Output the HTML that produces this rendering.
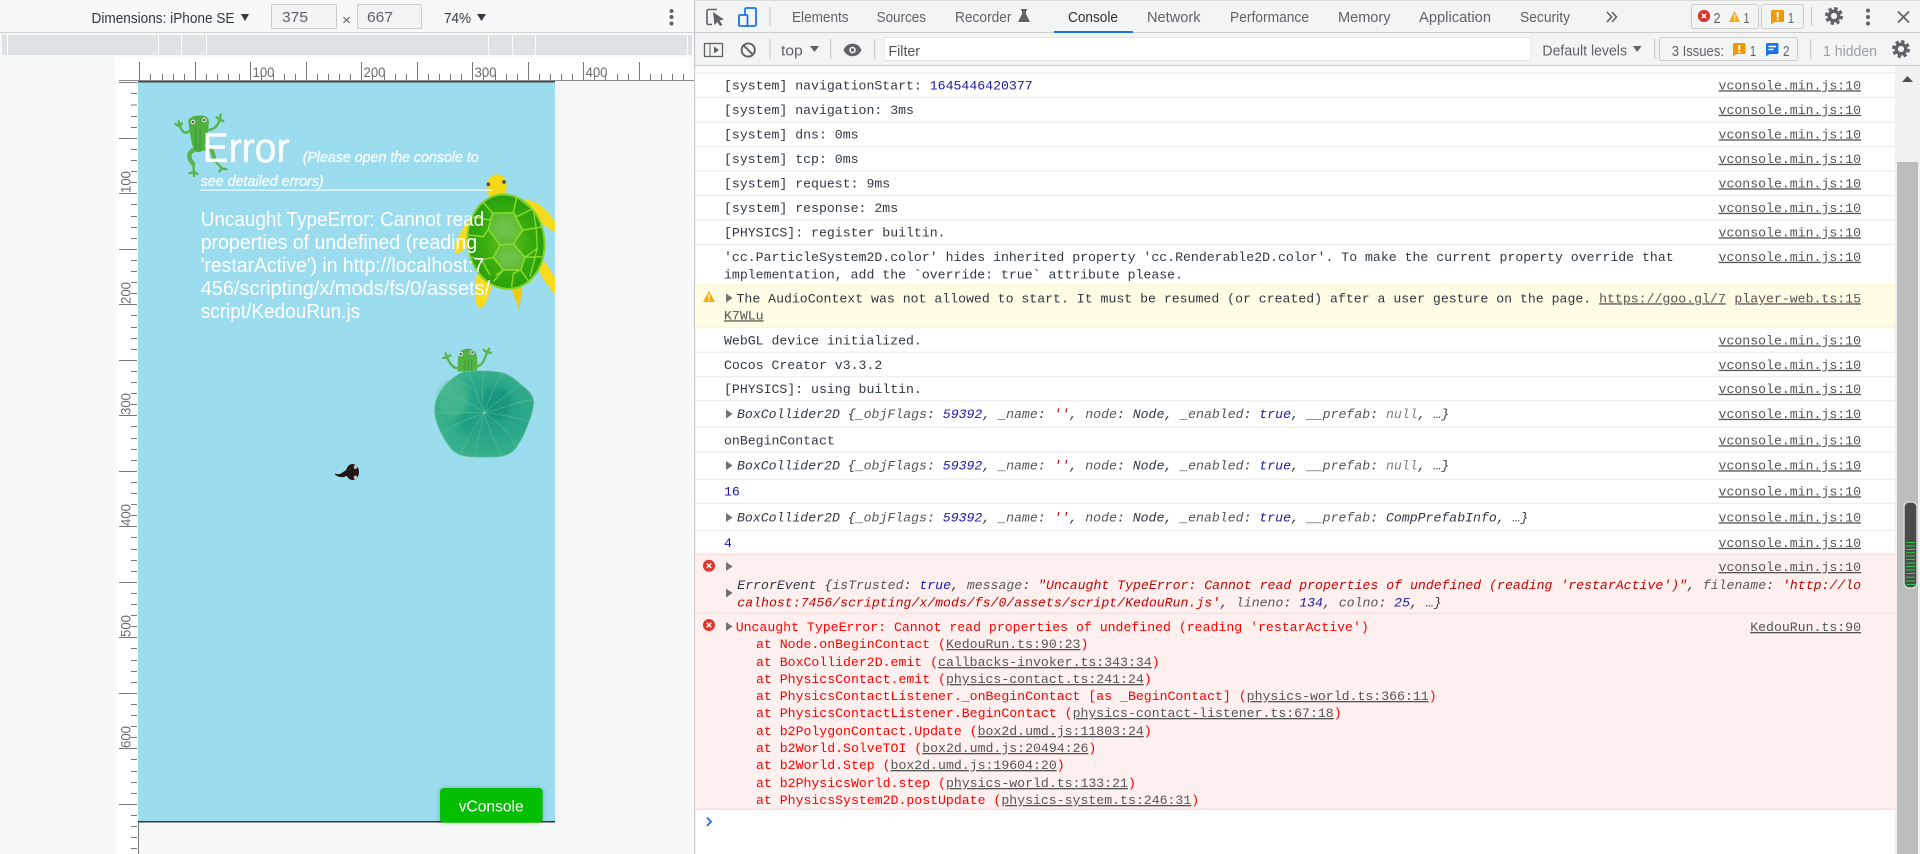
<!DOCTYPE html>
<html lang="en">
<head>
<meta charset="utf-8">
<title>DevTools</title>
<style>
html,body{margin:0;padding:0;width:1920px;height:854px;overflow:hidden;background:#fff}
svg{display:block}
text{white-space:pre}
.s{font-family:"Liberation Sans",sans-serif;font-size:14.5px;fill:#5f6368}
.m{font-family:"Liberation Mono",monospace;font-size:13.2px;fill:#303942}
.i{font-style:italic}
.k{fill:#565656}
.n{fill:#1a1aa6}
.r{fill:#c80000}
.e{fill:#ff0000}
.g{fill:#808080}
.l{fill:#555;text-decoration:underline}
.w{font-family:"Liberation Sans",sans-serif;fill:#fff}
.rl{font-family:"Liberation Sans",sans-serif;font-size:14px;fill:#6b6b6b}
</style>
</head>
<body>
<svg width="1920" height="854" viewBox="0 0 1920 854" xmlns="http://www.w3.org/2000/svg">
<defs>
<radialGradient id="shell" cx=".5" cy=".5" r=".55"><stop offset="0" stop-color="#5cc020"/><stop offset=".7" stop-color="#2fa808"/><stop offset="1" stop-color="#2a9a06"/></radialGradient>
<radialGradient id="hex" cx=".5" cy=".5" r=".6"><stop offset="0" stop-color="#72c64e"/><stop offset="1" stop-color="#5cb92e"/></radialGradient>
<radialGradient id="lily" cx=".58" cy=".48" r=".6"><stop offset="0" stop-color="#1f9d84"/><stop offset=".55" stop-color="#2aa88a"/><stop offset="1" stop-color="#3bb28c"/></radialGradient>
<filter id="b1" x="-20%" y="-20%" width="140%" height="140%"><feGaussianBlur stdDeviation=".35"/></filter>
<filter id="b2" x="-20%" y="-20%" width="140%" height="140%"><feGaussianBlur stdDeviation="2.5"/></filter>
<filter id="b3" x="-50%" y="-50%" width="200%" height="200%"><feGaussianBlur stdDeviation="6"/></filter>
<clipPath id="pg"><rect x="138" y="82" width="417" height="739"/></clipPath>
</defs>

<!-- left pane -->
<rect x="0" y="0" width="695" height="854" fill="#f7f8f8"/>
<rect x="0" y="32" width="695" height="1" fill="#d0d2d4"/>
<rect x="2" y="35" width="690" height="20" fill="#dee1e6"/>
<path d="M7.500 35v20M158.500 35v20M181.500 35v20M206.500 35v20M488.500 35v20M512.500 35v20M535.500 35v20M687.500 35v20" stroke="#fff" stroke-width="1"/>
<rect x="115" y="57" width="580" height="23" fill="#fff"/>
<rect x="116" y="80" width="22" height="774" fill="#fff"/>

<!-- device toolbar -->
<text class="s" x="91.500" y="23" textLength="143" lengthAdjust="spacingAndGlyphs" style="fill:#303942">Dimensions: iPhone SE</text>
<path d="M241 14h8l-4 7z" fill="#303942"/>
<rect x="271.500" y="4.500" width="65" height="24" fill="#f1f3f4" stroke="#ccc" rx="1"/>
<text class="s" x="282" y="22" textLength="26" lengthAdjust="spacingAndGlyphs" style="fill:#5f6368;font-size:15px">375</text>
<text class="s" x="342" y="25" textLength="9" lengthAdjust="spacingAndGlyphs" style="font-size:15px">×</text>
<rect x="357.500" y="4.500" width="64" height="24" fill="#f1f3f4" stroke="#ccc" rx="1"/>
<text class="s" x="367" y="22" textLength="26" lengthAdjust="spacingAndGlyphs" style="font-size:15px">667</text>
<text class="s" x="444" y="23" textLength="27" lengthAdjust="spacingAndGlyphs" style="fill:#303942">74%</text>
<path d="M477 14h9l-4.500 7z" fill="#303942"/>
<g fill="#5f6368"><circle cx="671.500" cy="11" r="2"/><circle cx="671.500" cy="17" r="2"/><circle cx="671.500" cy="23.500" r="2"/></g>

<!-- top ruler -->
<rect x="119" y="80" width="575" height="1" fill="#8a8a8a"/>
<path d="M139.500 62V80M195.500 62V80M250.500 62V80M306.500 62V80M361.500 62V80M417.500 62V80M472.500 62V80M528.500 62V80M583.500 62V80M639.500 62V80" stroke="#777" fill="none"/>
<path d="M150.500 74v6M162.500 74v6M173.500 74v6M184.500 74v6M206.500 74v6M217.500 74v6M228.500 74v6M239.500 74v6M261.500 74v6M273.500 74v6M284.500 74v6M295.500 74v6M317.500 74v6M328.500 74v6M339.500 74v6M350.500 74v6M372.500 74v6M384.500 74v6M395.500 74v6M406.500 74v6M428.500 74v6M439.500 74v6M450.500 74v6M461.500 74v6M483.500 74v6M495.500 74v6M506.500 74v6M517.500 74v6M539.500 74v6M550.500 74v6M561.500 74v6M572.500 74v6M594.500 74v6M605.500 74v6M617.500 74v6M628.500 74v6M650.500 74v6M661.500 74v6M672.500 74v6M683.500 74v6" stroke="#777" fill="none"/>
<text class="rl" x="252.500" y="77" textLength="22" lengthAdjust="spacingAndGlyphs">100</text>
<text class="rl" x="363.500" y="77" textLength="22" lengthAdjust="spacingAndGlyphs">200</text>
<text class="rl" x="474.500" y="77" textLength="22" lengthAdjust="spacingAndGlyphs">300</text>
<text class="rl" x="585.500" y="77" textLength="22" lengthAdjust="spacingAndGlyphs">400</text>

<!-- left ruler -->
<path d="M119 82.500H137M119 138.500H137M119 193.500H137M119 249.500H137M119 304.500H137M119 360.500H137M119 415.500H137M119 471.500H137M119 526.500H137M119 582.500H137M119 637.500H137M119 693.500H137M119 748.500H137M119 804.500H137" stroke="#777" fill="none"/>
<path d="M131 93.500h6M131 105h6M131 116.500h6M131 127.500h6M131 149.500h6M131 160.500h6M131 171.500h6M131 182.500h6M131 204.500h6M131 216.500h6M131 227.500h6M131 238.500h6M131 260.500h6M131 271.500h6M131 282.500h6M131 293.500h6M131 315.500h6M131 327.500h6M131 338.500h6M131 349.500h6M131 371.500h6M131 382.500h6M131 393.500h6M131 404.500h6M131 426.500h6M131 438.500h6M131 449.500h6M131 460.500h6M131 482.500h6M131 493.500h6M131 504.500h6M131 515.500h6M131 537.500h6M131 549.500h6M131 560.500h6M131 571.500h6M131 593.500h6M131 604.500h6M131 615.500h6M131 626.500h6M131 648.500h6M131 660.500h6M131 671.500h6M131 682.500h6M131 704.500h6M131 715.500h6M131 726.500h6M131 737.500h6M131 759.500h6M131 771.500h6M131 782.500h6M131 793.500h6M131 815.500h6M131 826.500h6M131 837.500h6M131 848.500h6" stroke="#777" fill="none"/>
<text class="rl" transform="translate(130.500 193) rotate(-90)" textLength="22" lengthAdjust="spacingAndGlyphs">100</text>
<text class="rl" transform="translate(130.500 304) rotate(-90)" textLength="22" lengthAdjust="spacingAndGlyphs">200</text>
<text class="rl" transform="translate(130.500 415) rotate(-90)" textLength="22" lengthAdjust="spacingAndGlyphs">300</text>
<text class="rl" transform="translate(130.500 526) rotate(-90)" textLength="22" lengthAdjust="spacingAndGlyphs">400</text>
<text class="rl" transform="translate(130.500 637) rotate(-90)" textLength="22" lengthAdjust="spacingAndGlyphs">500</text>
<text class="rl" transform="translate(130.500 748) rotate(-90)" textLength="22" lengthAdjust="spacingAndGlyphs">600</text>
<rect x="138" y="822" width="1" height="32" fill="#777"/>

<!-- page -->
<rect x="555" y="82" width="6" height="741" fill="#eef0f0" opacity=".4"/>
<rect x="138" y="82" width="417" height="739" fill="#9bdcef"/>
<rect x="138" y="81" width="417" height="1.500" fill="#444"/>
<rect x="138" y="821" width="417" height="1.500" fill="#2f3a3e"/>

<g clip-path="url(#pg)">
<!-- turtle -->
<g transform="translate(450 170) scale(.33333)" filter="url(#b1)">
<path d="M225 88C265 92 300 125 320 165V190C290 172 260 150 235 125Z" fill="#f6dc1a"/>
<path d="M275 268C295 285 310 315 320 330V378C295 350 265 310 262 285Z" fill="#f6dc1a"/>
<path d="M182 350H216L208 422Z" fill="#eccb14"/>
<path d="M82 310L130 330C120 370 105 415 90 415C72 405 70 360 82 310Z" fill="#f6dc1a"/>
<path d="M58 150C30 180 2 240 20 252C45 242 62 222 66 200Z" fill="#f6dc1a"/>
<path d="M110 50C110 25 125 13 140 13C160 13 172 30 170 50C168 75 160 98 145 100C125 98 112 75 110 50Z" fill="#f5d917"/>
<circle cx="115" cy="43" r="5.500" fill="#4a5060"/><circle cx="162" cy="36" r="5.500" fill="#4a5060"/>
<ellipse cx="168" cy="215" rx="115" ry="142" transform="rotate(-8 168 215)" fill="url(#shell)" stroke="#7fd32a" stroke-width="6"/>
<path d="M128 130L190 128L218 180L190 222L150 225L115 178Z" fill="url(#hex)" stroke="#8ad82e" stroke-width="5"/>
<path d="M150 225L190 222L225 262L212 300L160 300L130 262Z" fill="url(#hex)" stroke="#8ad82e" stroke-width="5"/>
<path d="M128 130L98 95M128 130L120 150L62 140M190 128L200 80M190 128L200 140L245 118M218 180L250 175L280 170M190 222L225 262L262 235M225 262L275 260M212 300L240 340M212 300L190 310L185 350M160 300L130 335M160 300L138 315M130 262L95 270L60 260M115 178L100 200L55 195M95 270L120 315" fill="none" stroke="#8ad82e" stroke-width="4.500"/>
<path d="M200 80L250 120L258 170L262 235L240 320" fill="none" stroke="#8ad82e" stroke-width="4"/>
</g>
<!-- frog 1 -->
<g filter="url(#b1)" fill="none" stroke-linecap="round" stroke-linejoin="round" transform="translate(170 110) scale(.33333)">
<path d="M62 60C50 72 40 72 30 50M30 50L16 42M30 50L26 34M30 50L36 40" stroke="#58b548" stroke-width="7"/>
<path d="M112 60C128 60 142 52 150 28M150 28L140 22M150 28L152 14M150 28L160 34" stroke="#58b548" stroke-width="7"/>
<path d="M76 118C48 128 58 150 70 162" stroke="#58b548" stroke-width="13"/>
<path d="M70 162L72 186M72 186L58 190M72 186L82 192M72 186L72 198" stroke="#58b548" stroke-width="7"/>
<path d="M100 116C132 110 128 135 134 152" stroke="#58b548" stroke-width="13"/>
<path d="M134 152L156 175M156 175L148 184M156 175L170 178" stroke="#58b548" stroke-width="7"/>
<path d="M56 40C50 28 65 17 85 17C107 14 120 25 116 42C114 70 108 100 100 120C92 128 78 128 72 120C62 95 60 65 56 40Z" fill="#4fb043" stroke="none"/>
<path d="M78 55V120M90 55V122" stroke="#3f9a38" stroke-width="4"/>
<circle cx="69" cy="36" r="7" fill="#d8dcd8" stroke="none"/><circle cx="69" cy="36" r="3.500" fill="#555" stroke="none"/>
<circle cx="103" cy="30" r="7" fill="#d8dcd8" stroke="none"/><circle cx="103" cy="30" r="3.500" fill="#555" stroke="none"/>
</g>
<!-- frog 2 + lily -->
<g transform="translate(425 340) scale(.33333)">
<g filter="url(#b1)" fill="none" stroke-linecap="round" stroke-linejoin="round">
<path d="M105 82C90 90 78 78 66 52M66 52L54 54M66 52L62 40M66 52L76 46" stroke="#58b548" stroke-width="7"/>
<path d="M150 80C170 80 178 62 186 38M186 38L176 30M186 38L198 38M186 38L192 26" stroke="#58b548" stroke-width="7"/>
<path d="M98 95C98 70 98 45 105 35C115 25 140 22 152 35C158 50 158 75 155 95Z" fill="#52b346" stroke="none"/>
<path d="M120 60V92M130 60V92M140 60V92" stroke="#3f9a38" stroke-width="3"/>
<circle cx="107" cy="42" r="7" fill="#d8dcd8" stroke="none"/><circle cx="107" cy="42" r="3.500" fill="#555" stroke="none"/>
<circle cx="142" cy="37" r="7" fill="#d8dcd8" stroke="none"/><circle cx="142" cy="37" r="3.500" fill="#555" stroke="none"/>
</g>
<path d="M130 93C165 92 205 92 232 98C255 104 275 122 292 137C310 150 325 165 326 185C326 205 320 225 312 245C304 270 290 300 272 325C255 345 235 350 205 351C180 352 155 352 130 350C105 346 88 340 75 322C58 300 42 270 33 240C26 215 28 190 38 170C50 145 70 125 90 110C102 100 115 95 130 93Z" fill="#4fa9a8" opacity=".35" filter="url(#b2)"/>
<path d="M130 93C165 92 205 92 232 98C255 104 275 122 292 137C310 150 325 165 326 185C326 205 320 225 312 245C304 270 290 300 272 325C255 345 235 350 205 351C180 352 155 352 130 350C105 346 88 340 75 322C58 300 42 270 33 240C26 215 28 190 38 170C50 145 70 125 90 110C102 100 115 95 130 93Z" fill="url(#lily)" stroke="#6cc59c" stroke-width="2" filter="url(#b1)"/>
<ellipse cx="85" cy="175" rx="45" ry="55" fill="#55bc90" opacity=".55" filter="url(#b3)"/>
<ellipse cx="215" cy="190" rx="45" ry="48" fill="#118f78" opacity=".55" filter="url(#b3)"/>
<ellipse cx="130" cy="250" rx="30" ry="30" fill="#179a80" opacity=".4" filter="url(#b3)"/>
<g fill="none" stroke="#6cc49b" stroke-width="2" opacity=".65" filter="url(#b1)">
<path d="M178 218H30M178 218C140 235 90 250 50 280M178 218C150 260 125 295 107 345M178 218C165 270 155 310 150 350M178 218C190 270 215 310 232 350M178 218C220 250 260 280 270 320M178 218C225 222 285 235 318 245M178 218C225 210 270 185 325 180M178 218C205 190 250 165 285 132M178 218C190 180 210 135 232 98M178 218C170 170 170 130 180 95M178 218C160 180 145 130 130 95M178 218C140 190 90 165 45 155M85 110L140 145"/>
</g>
<circle cx="178" cy="218" r="2.500" fill="#a8dcb0"/>
</g>
<!-- tadpole -->
<g filter="url(#b1)">
<ellipse cx="352.500" cy="472" rx="6.500" ry="8" fill="#231815"/>
<path d="M347 470C343 472 341 476 335 474C339 478 344 477 348 475Z" fill="#231815" stroke="#231815" stroke-width=".8"/>
<ellipse cx="355.500" cy="467" rx="1.800" ry="2" fill="#bbb"/>
<ellipse cx="355.500" cy="477.500" rx="1.800" ry="2" fill="#bbb"/>
</g>
</g>
<!-- error text -->
<text class="w" x="202.500" y="162" font-size="42" textLength="87" lengthAdjust="spacingAndGlyphs" stroke="#fff" stroke-width=".3">Error</text>
<text class="w" x="302.700" y="162" font-size="14.500" font-style="italic" textLength="176" lengthAdjust="spacingAndGlyphs" fill-opacity=".9" stroke="#fff" stroke-width=".3">(Please open the console to</text>
<text class="w" x="200.700" y="186" font-size="14.500" font-style="italic" textLength="123" lengthAdjust="spacingAndGlyphs" fill-opacity=".9" stroke="#fff" stroke-width=".3">see detailed errors)</text>
<rect x="200" y="189.500" width="292" height="1.200" fill="#fff" fill-opacity=".9"/>
<g font-size="20">
<text class="w" x="200.700" y="226" textLength="283.500" lengthAdjust="spacingAndGlyphs">Uncaught TypeError: Cannot read</text>
<text class="w" x="200.700" y="249" textLength="276.500" lengthAdjust="spacingAndGlyphs">properties of undefined (reading</text>
<text class="w" x="200.700" y="272" textLength="283.500" lengthAdjust="spacingAndGlyphs">'restarActive') in http://localhost:7</text>
<text class="w" x="200.700" y="295" textLength="289.500" lengthAdjust="spacingAndGlyphs">456/scripting/x/mods/fs/0/assets/</text>
<text class="w" x="200.700" y="318" textLength="159.500" lengthAdjust="spacingAndGlyphs">script/KedouRun.js</text>
</g>
<!-- vConsole -->
<rect x="440" y="788" width="103" height="35" rx="4" fill="#000" opacity=".22" filter="url(#b2)"/>
<rect x="440" y="788" width="102.700" height="34.700" rx="4" fill="#04be02"/>
<text class="w" x="458.700" y="811.500" font-size="15.600" textLength="65" lengthAdjust="spacingAndGlyphs">vConsole</text>

<!-- devtools pane -->
<rect x="695" y="0" width="1225" height="854" fill="#fff"/>
<rect x="695" y="0" width="1225" height="65" fill="#f3f4f4"/>
<rect x="694" y="0" width="1.200" height="854" fill="#c8c8c8"/>
<rect x="695" y="0" width="1225" height="1" fill="#dcdcdc"/>
<rect x="695" y="32" width="1225" height="1" fill="#cdcdcd"/>
<rect x="695" y="65" width="1225" height="1" fill="#cdcdcd"/>

<!-- tabs row icons -->
<path d="M717 9.500H708.500A1.500 1.500 0 0 0 707 11V23A1.500 1.500 0 0 0 708.500 24.500H712" fill="none" stroke="#5f6368" stroke-width="1.600"/>
<path d="M713 12L724 19.500L719.500 20.500L722.500 25L720 26L717.500 22L714.500 25Z" fill="#5f6368"/>
<rect x="745" y="8" width="11" height="18" rx="1.500" fill="none" stroke="#1a73e8" stroke-width="1.800"/>
<rect x="739" y="15" width="8.500" height="11" rx="1" fill="#f3f4f4" stroke="#1a73e8" stroke-width="1.800"/>
<rect x="769.500" y="7" width="1.200" height="19" fill="#ccc"/>
<text class="s" x="792" y="22" textLength="56.600" lengthAdjust="spacingAndGlyphs">Elements</text>
<text class="s" x="876.600" y="22" textLength="49.400" lengthAdjust="spacingAndGlyphs">Sources</text>
<text class="s" x="955" y="22" textLength="56.500" lengthAdjust="spacingAndGlyphs">Recorder</text>
<path d="M1021 9h6v1.500h-1V14l4 8h-12l4-8v-3.500h-1z" fill="#5f6368"/>
<text class="s" x="1068" y="22" textLength="50" lengthAdjust="spacingAndGlyphs" style="fill:#303030">Console</text>
<rect x="1054" y="31" width="79" height="2" fill="#1a73e8"/>
<text class="s" x="1147" y="22" textLength="53.500" lengthAdjust="spacingAndGlyphs">Network</text>
<text class="s" x="1230" y="22" textLength="79" lengthAdjust="spacingAndGlyphs">Performance</text>
<text class="s" x="1338" y="22" textLength="52.500" lengthAdjust="spacingAndGlyphs">Memory</text>
<text class="s" x="1419" y="22" textLength="72" lengthAdjust="spacingAndGlyphs">Application</text>
<text class="s" x="1520" y="22" textLength="50" lengthAdjust="spacingAndGlyphs">Security</text>
<path d="M1607 12l4.500 5-4.500 5M1612 12l4.500 5-4.500 5" fill="none" stroke="#5f6368" stroke-width="1.600"/>

<!-- top right badges -->
<rect x="1691.500" y="4.500" width="67" height="24" rx="2" fill="#f3f4f4" stroke="#cfcfcf"/>
<circle cx="1704" cy="16" r="6" fill="#d93025"/>
<path d="M1701.800 13.800l4.400 4.400M1706.200 13.800l-4.400 4.400" stroke="#fff" stroke-width="1.400"/>
<text class="s" x="1713.500" y="23" style="font-size:14.500px" textLength="7" lengthAdjust="spacingAndGlyphs">2</text>
<path d="M1734.500 11l5.500 11h-11z" fill="#f9ab00"/>
<rect x="1734" y="14.500" width="1.200" height="4" fill="#fff"/><rect x="1734" y="19.500" width="1.200" height="1.300" fill="#fff"/>
<text class="s" x="1743.500" y="23" textLength="6" lengthAdjust="spacingAndGlyphs">1</text>
<rect x="1761.500" y="4.500" width="42" height="24" rx="2" fill="#f3f4f4" stroke="#cfcfcf"/>
<path d="M1771 11.500a1.500 1.500 0 0 1 1.500-1.500h10a1.500 1.500 0 0 1 1.500 1.500v9a1.500 1.500 0 0 1-1.500 1.500h-8l-3.500 2.500z" fill="#f29900"/>
<rect x="1776.700" y="12" width="2" height="5.500" fill="#fff"/><rect x="1776.700" y="18.500" width="2" height="2" fill="#fff"/>
<text class="s" x="1788" y="23" textLength="6" lengthAdjust="spacingAndGlyphs">1</text>
<rect x="1811" y="7" width="1.200" height="19" fill="#ccc"/>
<g fill="none" stroke="#5f6368"><circle cx="1834" cy="16" r="4.800" stroke-width="3.400"/><circle cx="1834" cy="16" r="7.500" stroke-width="3" stroke-dasharray="3.300 2.590"/></g>
<g fill="#5f6368"><circle cx="1868" cy="10.500" r="2"/><circle cx="1868" cy="17" r="2"/><circle cx="1868" cy="23.500" r="2"/></g>
<path d="M1898 11.500l11 11M1909 11.500l-11 11" stroke="#5f6368" stroke-width="1.800"/>

<!-- console toolbar -->
<rect x="704.500" y="43.500" width="18" height="13" fill="none" stroke="#5f6368" stroke-width="1.300"/>
<rect x="709.500" y="43.500" width="1" height="13" fill="#5f6368"/>
<path d="M714 46.500l5 3.500-5 3.500z" fill="#5f6368"/>
<circle cx="748.200" cy="50" r="6.600" fill="none" stroke="#5f6368" stroke-width="1.900"/>
<path d="M743.500 45.300l9.400 9.400" stroke="#5f6368" stroke-width="1.900"/>
<rect x="769.500" y="39" width="1.200" height="20" fill="#ccc"/>
<text class="s" x="781" y="55.500" textLength="21.700" lengthAdjust="spacingAndGlyphs">top</text>
<path d="M810 46h9l-4.500 6z" fill="#5f6368"/>
<rect x="830" y="39" width="1.200" height="20" fill="#ccc"/>
<path d="M843.500 50C846 45 849 43.800 852.500 43.800S859 45 861.500 50C859 55 856 56.200 852.500 56.200S846 55 843.500 50Z" fill="#5f6368"/>
<circle cx="852.500" cy="50" r="3.300" fill="#f3f4f4"/><circle cx="852.500" cy="50" r="1.700" fill="#5f6368"/>
<rect x="874" y="39" width="1.200" height="20" fill="#ccc"/>
<rect x="884" y="37.500" width="647" height="23" fill="#fff" stroke="#e6e6e6"/>
<text class="s" x="888.500" y="56" textLength="31.500" lengthAdjust="spacingAndGlyphs" style="fill:#555">Filter</text>
<text class="s" x="1542.400" y="55.500" textLength="84.600" lengthAdjust="spacingAndGlyphs">Default levels</text>
<path d="M1633 46h8.500l-4.250 6z" fill="#5f6368"/>
<rect x="1654" y="39" width="1.200" height="20" fill="#ccc"/>
<rect x="1659.500" y="37.500" width="138" height="23" rx="2" fill="#f3f4f4" stroke="#cfcfcf"/>
<text class="s" x="1671.700" y="56" textLength="52.300" lengthAdjust="spacingAndGlyphs">3 Issues:</text>
<path d="M1733 44.500a1.500 1.500 0 0 1 1.500-1.500h9.500a1.500 1.500 0 0 1 1.500 1.500v8a1.500 1.500 0 0 1-1.500 1.500h-7.500l-3.500 2.500z" fill="#f29900"/>
<rect x="1738.300" y="45" width="2" height="5" fill="#fff"/><rect x="1738.300" y="51" width="2" height="2" fill="#fff"/>
<text class="s" x="1750" y="56" textLength="6" lengthAdjust="spacingAndGlyphs">1</text>
<path d="M1766 44.500a1.500 1.500 0 0 1 1.500-1.500h9.500a1.500 1.500 0 0 1 1.500 1.500v8a1.500 1.500 0 0 1-1.500 1.500h-7.500l-3.500 2.500z" fill="#1a73e8"/>
<path d="M1768.500 46.500h7.500M1768.500 49.500h5" stroke="#fff" stroke-width="1.400"/>
<text class="s" x="1783" y="56" textLength="6.500" lengthAdjust="spacingAndGlyphs">2</text>
<rect x="1810" y="39" width="1.200" height="20" fill="#ccc"/>
<text class="s" x="1823" y="56" textLength="54" lengthAdjust="spacingAndGlyphs" style="fill:#9aa0a6">1 hidden</text>
<g fill="none" stroke="#5f6368"><circle cx="1901" cy="49" r="4.800" stroke-width="3.400"/><circle cx="1901" cy="49" r="7.500" stroke-width="3" stroke-dasharray="3.300 2.590"/></g>

<!-- row backgrounds -->
<rect x="695" y="285" width="1200" height="42.300" fill="#fffbe5"/>
<rect x="695" y="554.300" width="1200" height="255" fill="#fff0f0"/>
<g stroke="#efefef" stroke-width="1.400" fill="none">
<path d="M695 73H1895M695 97.500H1895M695 122H1895M695 146.500H1895M695 171H1895M695 195.500H1895M695 220H1895M695 244.500H1895M695 352.300H1895M695 376.700H1895M695 400.700H1895M695 427.300H1895M695 452.300H1895M695 479.300H1895M695 503.300H1895M695 530.300H1895"/>
</g>
<path d="M695 285H1895M695 327.300H1895" stroke="#fff5c2" stroke-width="1.200" fill="none"/>
<path d="M695 554.300H1895M695 613.300H1895M695 809.300H1895" stroke="#ffd6d6" stroke-width="1.200" fill="none"/>

<!-- console rows -->
<text class="m" x="724" y="89.300">[system] navigationStart: <tspan class="n">1645446420377</tspan></text>
<text class="m" x="724" y="113.800">[system] navigation: 3ms</text>
<text class="m" x="724" y="138.300">[system] dns: 0ms</text>
<text class="m" x="724" y="162.800">[system] tcp: 0ms</text>
<text class="m" x="724" y="187.300">[system] request: 9ms</text>
<text class="m" x="724" y="211.800">[system] response: 2ms</text>
<text class="m" x="724" y="236.300">[PHYSICS]: register builtin.</text>
<text class="m" x="724" y="260.800">'cc.ParticleSystem2D.color' hides inherited property 'cc.Renderable2D.color'. To make the current property override that</text>
<text class="m" x="724" y="278.300">implementation, add the `override: true` attribute please.</text>

<path d="M709 291l6 11h-12z" fill="#f9ab00"/>
<rect x="708.300" y="294.500" width="1.400" height="4" fill="#fff"/><rect x="708.300" y="299.500" width="1.400" height="1.400" fill="#fff"/>
<path d="M726 293.500l6.600 4.500-6.600 4.500z" fill="#727272"/>
<text class="m" x="736.500" y="302.300">The AudioContext was not allowed to start. It must be resumed (or created) after a user gesture on the page. <tspan class="l">https://goo.gl/7</tspan></text>
<text class="m l" x="724" y="319.300">K7WLu</text>

<text class="m" x="724" y="344.300">WebGL device initialized.</text>
<text class="m" x="724" y="368.800">Cocos Creator v3.3.2</text>
<text class="m" x="724" y="392.800">[PHYSICS]: using builtin.</text>

<path d="M726 409.500l6.600 4.500-6.600 4.500z" fill="#727272"/>
<text class="m i" x="737" y="417.800">BoxCollider2D {<tspan class="k">_objFlags</tspan>: <tspan class="n">59392</tspan>, <tspan class="k">_name</tspan>: <tspan class="r">''</tspan>, <tspan class="k">node</tspan>: Node, <tspan class="k">_enabled</tspan>: <tspan class="n">true</tspan>, <tspan class="k">__prefab</tspan>: <tspan class="g">null</tspan>, …}</text>
<text class="m" x="724" y="444.300">onBeginContact</text>
<path d="M726 461l6.600 4.500-6.600 4.500z" fill="#727272"/>
<text class="m i" x="737" y="469.300">BoxCollider2D {<tspan class="k">_objFlags</tspan>: <tspan class="n">59392</tspan>, <tspan class="k">_name</tspan>: <tspan class="r">''</tspan>, <tspan class="k">node</tspan>: Node, <tspan class="k">_enabled</tspan>: <tspan class="n">true</tspan>, <tspan class="k">__prefab</tspan>: <tspan class="g">null</tspan>, …}</text>
<text class="m n" x="724" y="495.300">16</text>
<path d="M726 513l6.600 4.500-6.600 4.500z" fill="#727272"/>
<text class="m i" x="737" y="521.300">BoxCollider2D {<tspan class="k">_objFlags</tspan>: <tspan class="n">59392</tspan>, <tspan class="k">_name</tspan>: <tspan class="r">''</tspan>, <tspan class="k">node</tspan>: Node, <tspan class="k">_enabled</tspan>: <tspan class="n">true</tspan>, <tspan class="k">__prefab</tspan>: CompPrefabInfo, …}</text>
<text class="m n" x="724" y="546.800">4</text>

<circle cx="709" cy="565.700" r="6" fill="#e0352b"/>
<path d="M706.700 563.400l4.600 4.600M711.300 563.400l-4.600 4.600" stroke="#fff" stroke-width="1.400"/>
<path d="M726 562l6.600 4.500-6.600 4.500z" fill="#727272"/>
<path d="M726 588.500l6.600 4.500-6.600 4.500z" fill="#727272"/>
<text class="m i" x="737.300" y="589">ErrorEvent {<tspan class="k">isTrusted</tspan>: <tspan class="n">true</tspan>, <tspan class="k">message</tspan>: <tspan class="r">"Uncaught TypeError: Cannot read properties of undefined (reading 'restarActive')"</tspan>, <tspan class="k">filename</tspan>: <tspan class="r">'http://lo</tspan></text>
<text class="m i" x="737.300" y="606.500"><tspan class="r">calhost:7456/scripting/x/mods/fs/0/assets/script/KedouRun.js'</tspan>, <tspan class="k">lineno</tspan>: <tspan class="n">134</tspan>, <tspan class="k">colno</tspan>: <tspan class="n">25</tspan>, …}</text>

<circle cx="709" cy="625" r="6" fill="#e0352b"/>
<path d="M706.700 622.700l4.600 4.600M711.300 622.700l-4.600 4.600" stroke="#fff" stroke-width="1.400"/>
<path d="M726 622l6.600 4.500-6.600 4.500z" fill="#727272"/>
<text class="m e" x="735.700" y="631">Uncaught TypeError: Cannot read properties of undefined (reading 'restarActive')</text>
<g class="stack">
<text class="m e" x="756" y="648">at Node.onBeginContact (<tspan class="l">KedouRun.ts:90:23</tspan>)</text>
<text class="m e" x="756" y="666">at BoxCollider2D.emit (<tspan class="l">callbacks-invoker.ts:343:34</tspan>)</text>
<text class="m e" x="756" y="683">at PhysicsContact.emit (<tspan class="l">physics-contact.ts:241:24</tspan>)</text>
<text class="m e" x="756" y="700">at PhysicsContactListener._onBeginContact [as _BeginContact] (<tspan class="l">physics-world.ts:366:11</tspan>)</text>
<text class="m e" x="756" y="717">at PhysicsContactListener.BeginContact (<tspan class="l">physics-contact-listener.ts:67:18</tspan>)</text>
<text class="m e" x="756" y="735">at b2PolygonContact.Update (<tspan class="l">box2d.umd.js:11803:24</tspan>)</text>
<text class="m e" x="756" y="752">at b2World.SolveTOI (<tspan class="l">box2d.umd.js:20494:26</tspan>)</text>
<text class="m e" x="756" y="769">at b2World.Step (<tspan class="l">box2d.umd.js:19604:20</tspan>)</text>
<text class="m e" x="756" y="787">at b2PhysicsWorld.step (<tspan class="l">physics-world.ts:133:21</tspan>)</text>
<text class="m e" x="756" y="804">at PhysicsSystem2D.postUpdate (<tspan class="l">physics-system.ts:246:31</tspan>)</text>
</g>
<path d="M707 817.500l4 4.200-4 4.200" fill="none" stroke="#1a73e8" stroke-width="1.800"/>

<!-- source links -->
<g text-anchor="end">
<text class="m l" x="1861" y="89.300">vconsole.min.js:10</text>
<text class="m l" x="1861" y="113.800">vconsole.min.js:10</text>
<text class="m l" x="1861" y="138.300">vconsole.min.js:10</text>
<text class="m l" x="1861" y="162.800">vconsole.min.js:10</text>
<text class="m l" x="1861" y="187.300">vconsole.min.js:10</text>
<text class="m l" x="1861" y="211.800">vconsole.min.js:10</text>
<text class="m l" x="1861" y="236.300">vconsole.min.js:10</text>
<text class="m l" x="1861" y="260.800">vconsole.min.js:10</text>
<text class="m l" x="1861" y="302.300">player-web.ts:15</text>
<text class="m l" x="1861" y="344.300">vconsole.min.js:10</text>
<text class="m l" x="1861" y="368.800">vconsole.min.js:10</text>
<text class="m l" x="1861" y="392.800">vconsole.min.js:10</text>
<text class="m l" x="1861" y="417.800">vconsole.min.js:10</text>
<text class="m l" x="1861" y="444.300">vconsole.min.js:10</text>
<text class="m l" x="1861" y="469.300">vconsole.min.js:10</text>
<text class="m l" x="1861" y="495.300">vconsole.min.js:10</text>
<text class="m l" x="1861" y="521.300">vconsole.min.js:10</text>
<text class="m l" x="1861" y="546.800">vconsole.min.js:10</text>
<text class="m l" x="1861" y="571">vconsole.min.js:10</text>
<text class="m l" x="1861" y="631">KedouRun.ts:90</text>
</g>

<!-- scrollbar -->
<rect x="1895" y="66" width="25" height="788" fill="#f1f1f1"/>
<path d="M1902 82l5.500-6 5.500 6z" fill="#505050"/>
<rect x="1897" y="162" width="21" height="692" fill="#bdbdbd"/>
<rect x="1904" y="502" width="13" height="86" rx="5" fill="#4a4a4a" stroke="#d4d4d4" stroke-width="1.500"/>
<path d="M1906 542.500h9M1906 546h9M1906 549.500h9M1906 552.800h9M1906 556h9M1906 559.500h9M1906 563h9M1906 566.500h9M1906 570h9M1906 573.500h9M1906 577.300h9M1906 581h9M1906 584.500h9" stroke="#2ecc48" stroke-width="1" fill="none"/>
</svg>
</body>
</html>
